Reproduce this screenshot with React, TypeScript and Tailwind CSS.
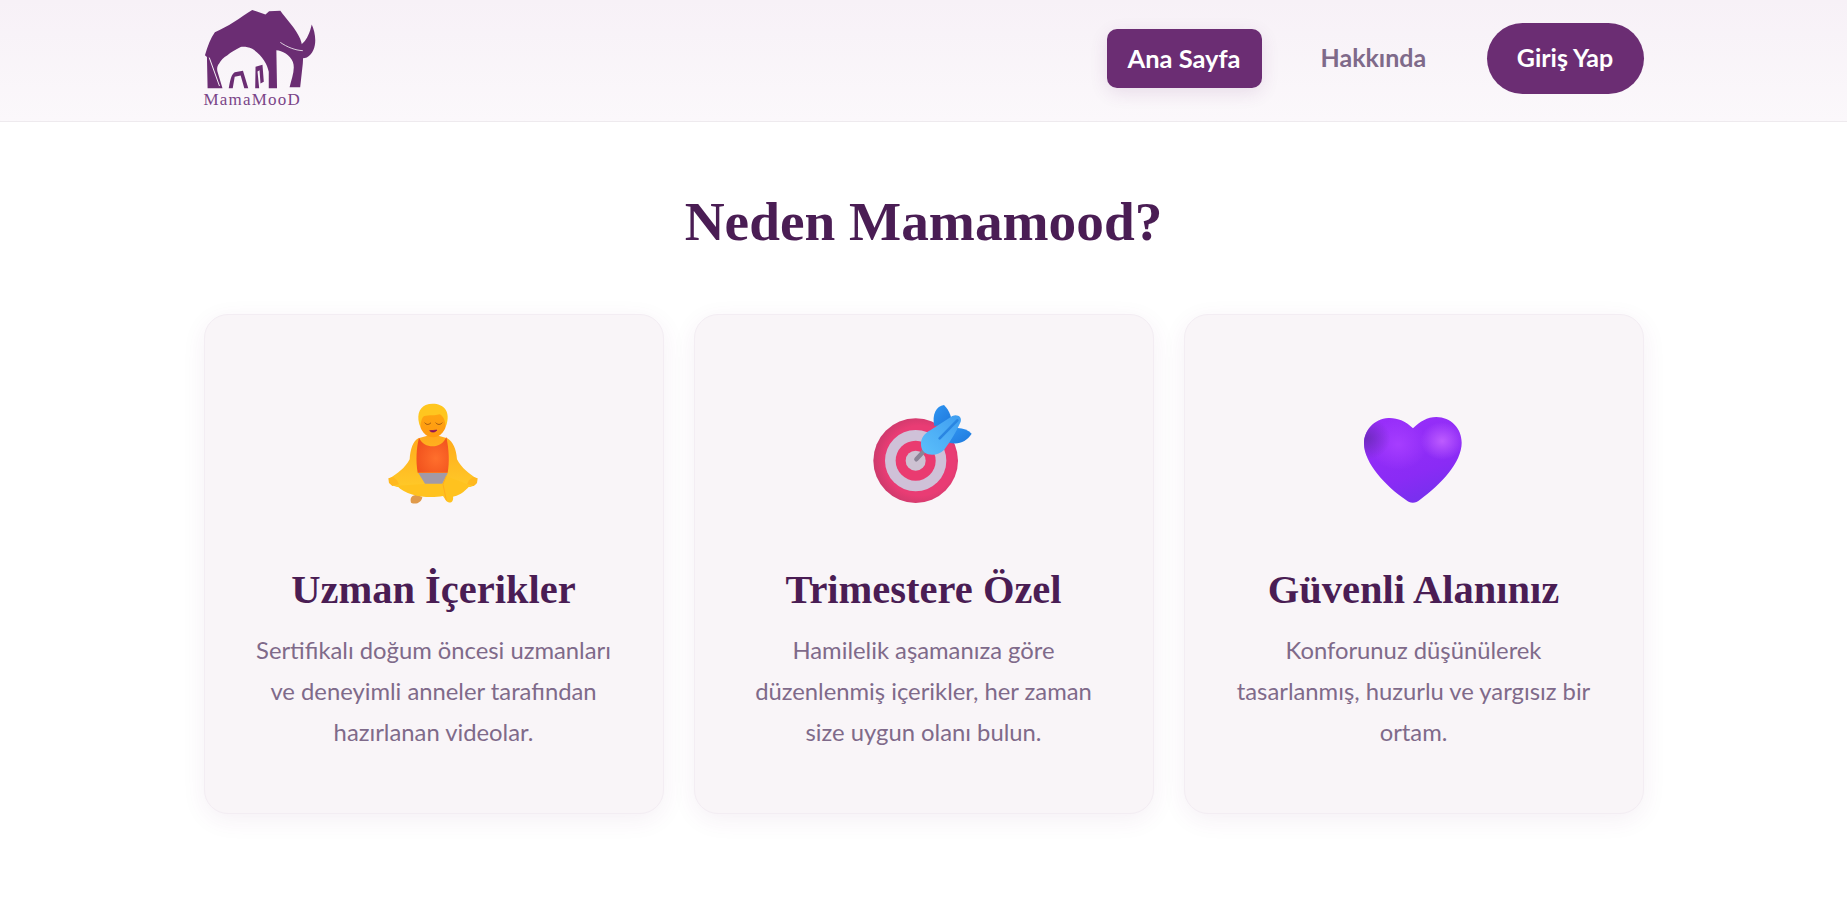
const cards = [
  {
    title: "Uzman İçerikler",
    lines: ["Sertifikalı doğum öncesi uzmanları", "ve deneyimli anneler tarafından", "hazırlanan videolar."],
    icon: <PersonIcon />,
  },
  {
    title: "Trimestere Özel",
    lines: ["Hamilelik aşamanıza göre", "düzenlenmiş içerikler, her zaman", "size uygun olanı bulun."],
    icon: <TargetIcon />,
  },
  {
    title: "Güvenli Alanınız",
    lines: ["Konforunuz düşünülerek", "tasarlanmış, huzurlu ve yargısız bir", "ortam."],
    icon: <HeartIcon />,
  },
];

const heartPath =
  "M192 112 C170 90 145 80 118 81 C75 84 45 118 45 158 C45 215 110 285 170 326 C183 338 200 338 213 326 C275 280 338 215 338 155 C338 112 305 78 262 78 C235 78 212 92 192 112 Z";

function Logo() {
  return (
    <svg viewBox="40 25 340 245" className="h-[81px] w-[113px]" fill="#6b2d73">
      <path d="M42 165 C50 135 60 112 72 95 C110 80 150 50 185 28 L225 42 L236 32 L270 30 C288 55 318 85 330 115 C338 135 340 160 338 190 L330 262 L298 262 C304 235 316 208 308 185 C300 165 275 150 258 150 L260 265 L235 265 L235 215 C230 190 215 165 185 145 C170 138 155 138 150 140 C135 148 120 155 110 165 C98 172 90 180 85 190 C78 198 78 208 80 215 L95 265 L50 265 L48 170 Z" />
      <path d="M270 125 C295 145 345 160 365 72 C378 100 385 150 350 172 C325 180 290 160 270 125 Z" />
      <path d="M270 126 C290 140 315 150 338 151" stroke="#f7f2f7" strokeWidth="2.5" fill="none" />
      <path d="M55 172 L86 258" stroke="#f7f2f7" strokeWidth="3" fill="none" />
      <path d="M114 265 C118 240 122 222 132 216 L157 212 L173 265 L161 265 L150 226 L132 230 L126 265 Z" />
      <path d="M194 265 L195 200 L216 194 L220 245 L210 250 L207 210 L201 214 L206 265 Z" />
    </svg>
  );
}

function PersonIcon() {
  return (
    <svg viewBox="0 0 390 360" className="h-[120px] w-[130px]">
      <defs>
        <linearGradient id="skin" x1="0" y1="0" x2="0" y2="1">
          <stop offset="0" stopColor="#ffa91c" />
          <stop offset="1" stopColor="#ffc928" />
        </linearGradient>
        <radialGradient id="tank" cx="0.6" cy="0.6" r="0.7">
          <stop offset="0" stopColor="#ff6f2c" />
          <stop offset="1" stopColor="#f04f1c" />
        </radialGradient>
        <linearGradient id="face" x1="0" y1="0" x2="0" y2="1">
          <stop offset="0" stopColor="#ffa712" />
          <stop offset="1" stopColor="#ff9a10" />
        </linearGradient>
      </defs>
      <path d="M126 335 C122 320 128 312 145 312 L160 318 C158 335 140 342 126 335 Z" fill="#e09a4a" />
      <path d="M148 142 C132 150 124 175 122 205 C108 232 85 248 62 262 C56 272 66 284 84 288 L150 290 L240 290 L304 288 C322 284 328 272 322 262 C300 248 278 232 264 205 C262 175 252 152 235 142 L192 130 Z" fill="url(#skin)" />
      <path d="M58 262 L72 258 L84 268 L90 280 L70 285 L60 276 Z M326 262 L312 258 L300 268 L294 280 L314 285 L324 276 Z" fill="#ffb81f" />
      <path d="M150 140 C165 175 218 175 232 138 C240 175 242 215 236 245 L146 245 C140 210 142 170 150 140 Z" fill="url(#tank)" />
      <path d="M148 246 L236 246 L220 278 L168 278 Z" fill="#a29aa6" />
      <path d="M84 284 L168 279 L222 279 L232 255 C245 262 280 272 302 284 C285 305 265 315 252 317 C255 332 243 340 232 330 L222 315 C180 322 115 318 84 284 Z" fill="#ffc21f" />
      <path d="M232 255 L222 280 L232 328" stroke="#ffad1c" strokeWidth="3" fill="none" />
      <ellipse cx="192" cy="92" rx="40" ry="47" fill="url(#face)" />
      <path d="M154 108 C142 78 148 52 170 42 C190 34 218 38 230 56 C240 72 236 92 230 108 C229 90 224 76 212 70 C192 76 172 70 162 78 C157 86 155 96 154 108 Z" fill="#ffc61f" />
      <path d="M167 95 C172 102 180 102 186 95 M200 95 C206 102 214 102 220 95" stroke="#8c4a12" strokeWidth="2.5" fill="none" />
      <path d="M182 119 C188 125 198 125 204 117 C198 118 188 119 182 119 Z" fill="#8a0f5c" stroke="#8a0f5c" strokeWidth="2" />
    </svg>
  );
}

function TargetIcon() {
  return (
    <svg viewBox="0 0 390 360" className="h-[120px] w-[130px]">
      <defs>
        <radialGradient id="ring" cx="0.55" cy="0.5" r="0.55">
          <stop offset="0.75" stopColor="#e93c74" />
          <stop offset="1" stopColor="#cc3a6c" />
        </radialGradient>
        <linearGradient id="fin" x1="0" y1="0" x2="1" y2="1">
          <stop offset="0" stopColor="#2f95f2" />
          <stop offset="1" stopColor="#1f78dc" />
        </linearGradient>
        <linearGradient id="dart" x1="0" y1="1" x2="1" y2="0">
          <stop offset="0" stopColor="#5cc0fb" />
          <stop offset="1" stopColor="#3f9df0" />
        </linearGradient>
      </defs>
      <circle cx="170" cy="209" r="127" fill="url(#ring)" />
      <circle cx="170" cy="209" r="92" fill="#cfc1d8" />
      <circle cx="170" cy="209" r="60" fill="#ea3b70" />
      <circle cx="170" cy="209" r="30" fill="#cdc2d2" />
      <path d="M172 205 L195 180" stroke="#8b8496" strokeWidth="13" strokeLinecap="round" />
      <path d="M226 105 C218 70 232 45 255 42 C272 60 280 80 276 100 Z" fill="url(#fin)" />
      <path d="M270 155 C300 162 322 152 338 128 C325 115 305 108 285 112 Z" fill="url(#fin)" />
      <path d="M186 162 C184 142 198 126 214 118 L280 75 C295 68 310 78 305 92 C292 122 275 150 255 177 C235 198 188 198 186 162 Z" fill="url(#dart)" />
      <path d="M242 142 L295 88" stroke="#2a86e2" strokeWidth="8" strokeLinecap="round" />
    </svg>
  );
}

function HeartIcon() {
  return (
    <svg viewBox="0 0 390 360" className="h-[120px] w-[130px]">
      <defs>
        <linearGradient id="heartBase" x1="0" y1="0" x2="0.4" y2="1">
          <stop offset="0" stopColor="#9a2ffa" />
          <stop offset="0.75" stopColor="#8a2bf5" />
          <stop offset="1" stopColor="#7a2fef" />
        </linearGradient>
        <radialGradient id="heartGlow" cx="0.8" cy="0.28" r="0.22">
          <stop offset="0" stopColor="#bd5cff" />
          <stop offset="1" stopColor="#bd5cff" stopOpacity="0" />
        </radialGradient>
        <radialGradient id="heartLeft" cx="0.35" cy="0.32" r="0.3">
          <stop offset="0" stopColor="#a63dff" />
          <stop offset="1" stopColor="#a63dff" stopOpacity="0" />
        </radialGradient>
        <radialGradient id="heartEdge" cx="0.02" cy="0.25" r="0.25">
          <stop offset="0" stopColor="#6f2bbf" />
          <stop offset="1" stopColor="#6f2bbf" stopOpacity="0" />
        </radialGradient>
      </defs>
      <path d={heartPath} fill="url(#heartBase)" />
      <path d={heartPath} fill="url(#heartLeft)" />
      <path d={heartPath} fill="url(#heartGlow)" />
      <path d={heartPath} fill="url(#heartEdge)" />
    </svg>
  );
}

export default function App() {
  return (
    <div className="min-h-screen bg-white font-['Lato',sans-serif]">
      <header className="h-[122px] border-b border-[#eeeaee] bg-gradient-to-b from-[#f7f1f7] to-[#fbf8fb]">
        <div className="mx-auto flex h-full w-[1440px] items-center justify-between">
          <a className="mb-[5px] flex flex-col">
            <Logo />
            <span className="mt-[1px] font-['Liberation_Serif',serif] text-[17px] leading-[17px] tracking-[1.2px] text-[#7a4588]">
              MamaMooD
            </span>
          </a>
          <nav className="mb-[5px] flex items-center">
            <a className="flex h-[59px] w-[155px] items-center justify-center rounded-[10px] bg-[#6b2d73] text-[25.5px] font-bold text-white shadow-[0_5px_18px_rgba(107,45,115,0.12)]">
              Ana Sayfa
            </a>
            <a className="ml-[59px] w-[105px] text-center text-[25px] font-bold text-[#7f6a8a]">
              Hakkında
            </a>
            <a className="ml-[61px] flex h-[71px] w-[157px] items-center justify-center rounded-full bg-[#6b2d73] text-[25px] font-bold text-white">
              Giriş Yap
            </a>
          </nav>
        </div>
      </header>
      <main className="mx-auto w-[1440px] pt-[64px]">
        <h2 className="text-center font-['Liberation_Serif',serif] text-[55.3px] font-bold leading-[72px] text-[#4a1d54]">
          Neden Mamamood?
        </h2>
        <div className="mt-[56px] grid grid-cols-3 gap-[30px]">
          {cards.map((card) => (
            <div
              key={card.title}
              className="flex h-[500px] flex-col items-center rounded-[24px] border border-[#f3edf3] bg-[#f9f5f8] pt-[76px] text-center shadow-[0_6px_24px_rgba(107,45,115,0.07)]"
            >
              {card.icon}
              <h3 className="mt-[50px] font-['Liberation_Serif',serif] text-[40.5px] font-bold leading-[58px] text-[#4a1d54]">
                {card.title}
              </h3>
              <p className="mt-[11px] text-[23.8px] leading-[41px] text-[#7f6a8a]">
                {card.lines.map((line) => (
                  <span key={line} className="block">
                    {line}
                  </span>
                ))}
              </p>
            </div>
          ))}
        </div>
      </main>
    </div>
  );
}
